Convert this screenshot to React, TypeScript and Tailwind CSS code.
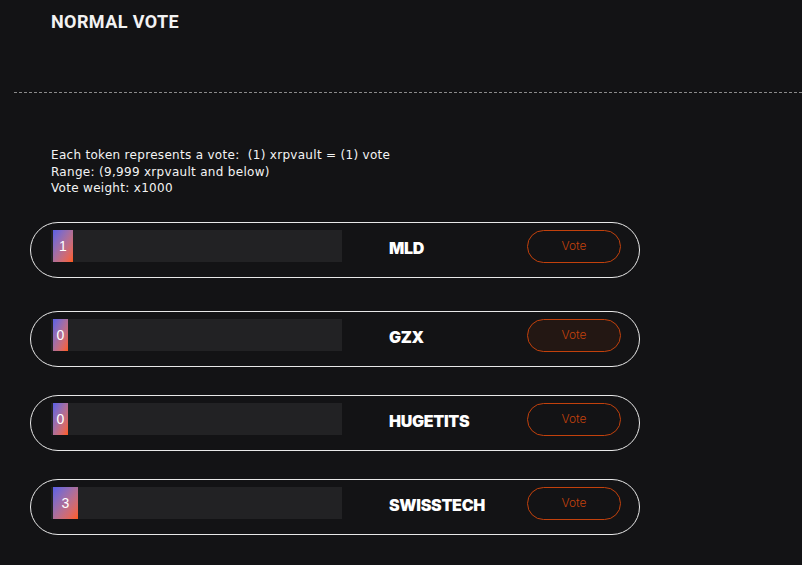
import React from "react";

type Candidate = {
  name: string;
  votes: number;
  fill: number;
  active?: boolean;
};

const candidates: Candidate[] = [
  { name: "MLD", votes: 1, fill: 20 },
  { name: "GZX", votes: 0, fill: 15, active: true },
  { name: "HUGETITS", votes: 0, fill: 15 },
  { name: "SWISSTECH", votes: 3, fill: 25 },
];

function VoteRow({ c }: { c: Candidate }) {
  return (
    <div className="flex h-[56px] w-[610px] items-start rounded-full border border-[#e8e8e8] pl-[20px] pr-[18px] pt-[7px]">
      <div className="flex h-[32px] w-[291px] bg-[#222224] pl-[2px]">
        <div
          className="flex h-full items-center justify-center bg-gradient-to-br from-[#5a5ee8] to-[#ff5a0a] pt-[1px] font-['Liberation_Sans',sans-serif] text-[14px] text-white"
          style={{ width: c.fill }}
        >
          {c.votes}
        </div>
      </div>
      <div className="ml-[47px] mt-[6px] font-['Inter',sans-serif] text-[16px] font-black tracking-[-0.3px] text-white">
        {c.name}
      </div>
      <button
        className={
          "ml-auto h-[33px] w-[94px] rounded-full border border-[#c2410c] font-['Inter',sans-serif] text-[12px] font-light text-[#c2410c] " +
          (c.active ? "bg-[#231713]" : "bg-transparent")
        }
      >
        Vote
      </button>
    </div>
  );
}

export default function App() {
  return (
    <div className="min-h-[565px] w-full bg-[#131315] font-['Roboto',sans-serif] text-white">
      <div className="pl-[51px] pt-[10px]">
        <h1 className="text-[18px] font-bold leading-[24px] tracking-[0.4px] text-[#f2f2f2]">NORMAL VOTE</h1>
      </div>
      <div className="ml-[14px] mt-[58px] border-t border-dashed border-[#8a8a8a]" />
      <div className="pl-[51px] pt-[54px] font-['DejaVu_Sans',sans-serif] text-[12px] leading-[16.5px] tracking-[0.3px] text-[#f4f4f4]">
        <p>Each token represents a vote:&nbsp; (1) xrpvault = (1) vote</p>
        <p>Range: (9,999 xrpvault and below)</p>
        <p>Vote weight: x1000</p>
      </div>
      <div className="mt-[25px] flex flex-col gap-[28px] pl-[30px]">
        {candidates.map((c, i) => (
          <div key={c.name} className={i === 0 ? "mb-[5px]" : ""}>
            <VoteRow c={c} />
          </div>
        ))}
      </div>
    </div>
  );
}
